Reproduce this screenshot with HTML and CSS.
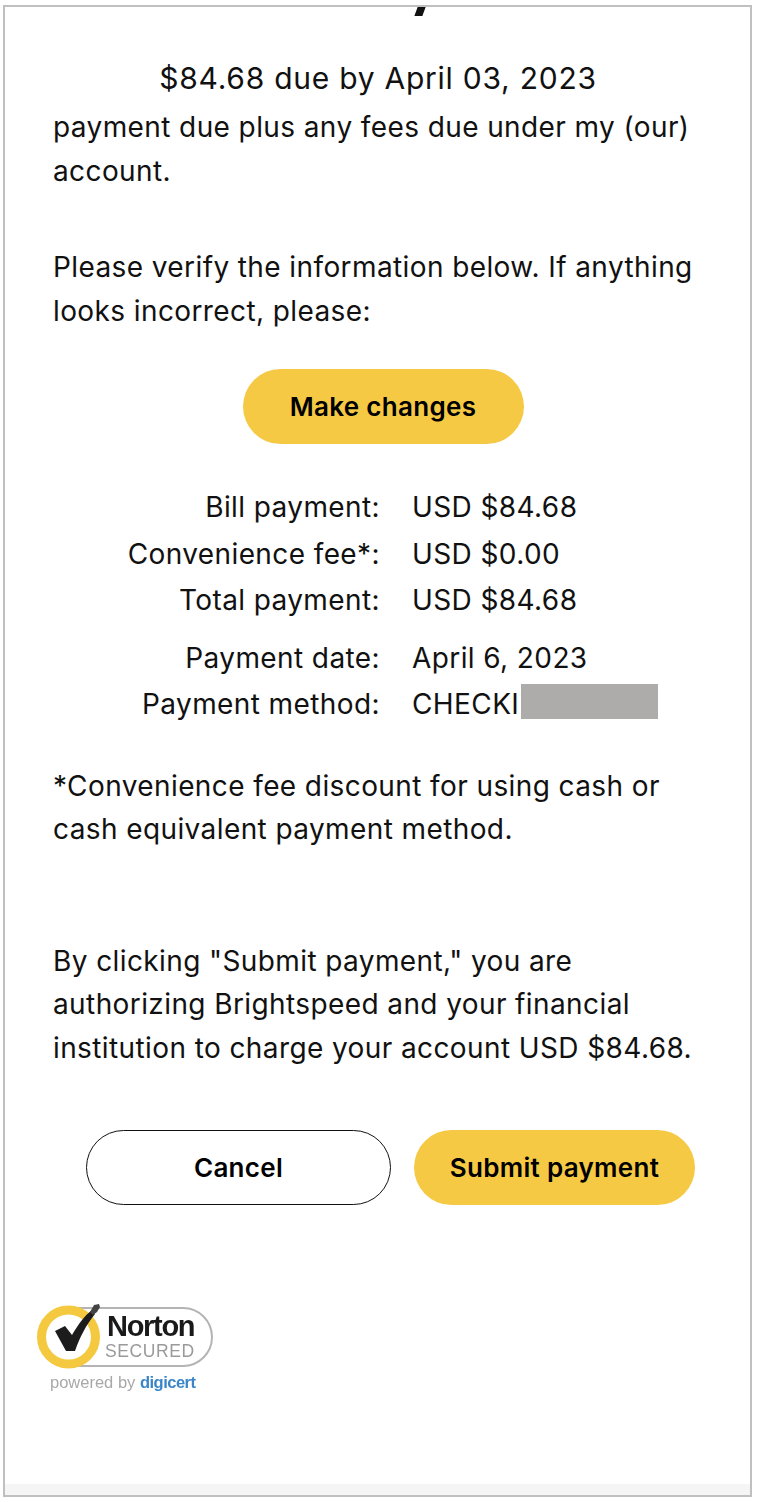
FILE: index.html
```html
<!DOCTYPE html>
<html lang="en">
<head>
<meta charset="utf-8">
<title>Review payment</title>
<link rel="stylesheet" href="styles.css">
</head>
<body>
<main class="frame">
  <div class="clip"><span class="tick"></span></div>
  <p class="due">$84.68 due by April 03, 2023</p>
  <p class="para lead">payment due plus any fees due under my (our) account.</p>
  <p class="para verify">Please verify the information below. If anything looks incorrect, please:</p>
  <div class="center"><button class="btn primary change">Make changes</button></div>
  <dl class="summary">
    <dt>Bill payment:</dt><dd>USD $84.68</dd>
    <dt>Convenience fee*:</dt><dd>USD $0.00</dd>
    <dt>Total payment:</dt><dd>USD $84.68</dd>
    <dt class="sep">Payment date:</dt><dd class="sep">April 6, 2023</dd>
    <dt>Payment method:</dt><dd class="method">CHECKI<span class="redact"></span></dd>
  </dl>
  <p class="para note">*Convenience fee discount for using cash or cash equivalent payment method.</p>
  <p class="para auth">By clicking "Submit payment," you are authorizing Brightspeed and your financial institution to charge your account USD $84.68.</p>
  <div class="actions">
    <button class="btn cancel">Cancel</button>
    <button class="btn primary submit">Submit payment</button>
  </div>
  <svg class="norton" width="184" height="92" viewBox="0 0 184 92" role="img" aria-label="Norton Secured, powered by DigiCert">
    <path d="M36 7H149a29 29 0 0 1 0 58H36" fill="#fff" stroke="#b4b4b4" stroke-width="2"/>
    <circle cx="34.5" cy="36" r="27" fill="#fff" stroke="#f5c93f" stroke-width="9"/>
    <path d="M21 30L31 25L38 34C44 24 50 15 58 9L61 13C52 24 46 36 41 50H32Z" fill="#1c1c1c"/>
    <path d="M56 11L60 4L65 3L66 6L63 11L59 14Z" fill="#444"/>
    <text x="73" y="35" class="nt">Norton</text>
    <text x="71" y="56" class="ns">SECURED</text>
    <text x="16" y="87" class="pw">powered by <tspan class="dc">digicert</tspan></text>
  </svg>
  <div class="foot"></div>
</main>
</body>
</html>
```
FILE: styles.css
```css
* { box-sizing: border-box; }
html, body { margin: 0; padding: 0; background: #fff; }
body { width: 760px; height: 1502px; padding: 5px 8px 5px 3px; font-family: Inter, "Liberation Sans", sans-serif; color: #111; }
.frame { position: relative; height: 1492px; border: 2px solid #c0c0c0; background: #fff; display: flex; flex-direction: column; overflow: hidden; }
.clip { height: 9px; padding-left: 411px; }
.tick { display: block; width: 8px; height: 9px; background: #111; transform: skewX(-20deg); }
p { margin: 0; }
.due { margin: 44px 0 0 1px; text-align: center; font-size: 30px; line-height: 36px; letter-spacing: 0.75px; }
.para { padding: 0 48px; font-size: 28px; line-height: 43.5px; letter-spacing: 0.4px; }
.lead { margin-top: 10px; }
.verify { margin-top: 53px; }
.center { display: flex; justify-content: center; margin-top: 36px; padding-left: 11px; }
.btn { font-family: Inter, sans-serif; font-weight: 600; font-size: 26px; letter-spacing: 0.3px; height: 75px; border-radius: 38px; border: 0; color: #000; padding: 0; }
.primary { background: #f5c944; }
.change { width: 281px; }
.summary { display: grid; grid-template-columns: 327px 1fr; column-gap: 32px; margin: 40px 0 0 48px; font-size: 28px; line-height: 46.6px; letter-spacing: 0.4px; }
.summary dt { text-align: right; }
.summary dd { margin: 0; }
.summary .sep { margin-top: 11px; }
.method { position: relative; }
.redact { position: absolute; left: 109px; top: 3px; width: 137px; height: 35px; background: #adacab; }
.note { margin-top: 37px; }
.auth { margin-top: 88px; }
.actions { display: flex; gap: 23px; margin: 60px 0 0 81px; }
.cancel { width: 305px; background: #fff; border: 1.5px solid #111; }
.submit { width: 281px; }
.norton { display: block; margin: 96px 0 0 29px; filter: blur(0.5px); }
.nt { font: 700 29px "Liberation Sans", sans-serif; letter-spacing: -1.3px; fill: #1a1a1a; }
.ns { font: 400 17.5px "Liberation Sans", sans-serif; letter-spacing: 0.6px; fill: #9a9a9a; }
.pw { font: 400 16.5px "Liberation Sans", sans-serif; fill: #a8a8a8; }
.dc { font-weight: 700; fill: #3a86c8; letter-spacing: -0.5px; }
.foot { position: absolute; left: 0; right: 0; bottom: 0; height: 11px; background: #f5f5f5; }
```
